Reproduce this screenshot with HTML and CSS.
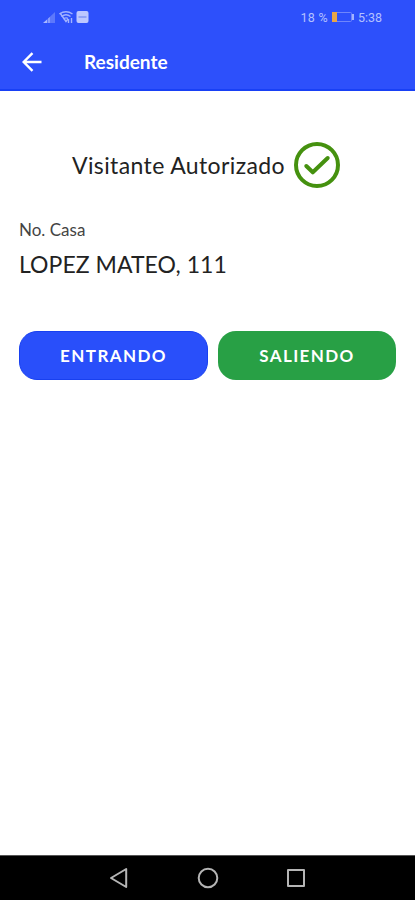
FILE: index.html
```html
<!DOCTYPE html>
<html lang="es">
  <head>
    <meta charset="UTF-8" />
    <meta name="viewport" content="width=device-width, initial-scale=1.0" />
    <title>Residente</title>
    <link rel="stylesheet" href="styles.css">
  </head>
  <body>
    <header class="header">
      <div class="status-bar">
        <svg class="status-icons" width="48" height="14" viewBox="0 0 48 14">
          <path d="M1 13L5 9.5V13Z" fill="#a9b8ff" />
          <path d="M5 9.5L13 2V13H5Z" fill="#5d78fb" />
          <path d="M6 8.5L8 7V13H6Z" fill="#8a9dfd" />
          <g fill="none" stroke="#a3b3ff" stroke-width="1.4">
            <path d="M17.5 4Q24 -0.5 30.5 4" />
            <path d="M19.5 6.5Q24 3 28.5 6.5" />
            <path d="M21.5 9Q24 7 26 8.5" />
            <path d="M18 3L24 11.5L26 9" />
            <path d="M26.5 9V13M29.5 8V13" />
          </g>
          <rect x="34.5" y="1" width="12" height="12" rx="2" fill="#bdc8ff" />
          <path d="M36.5 7H44.5" stroke="#8297f5" stroke-width="1.5" />
        </svg>
        <div class="status-right">
          <span class="percent">18 %</span>
          <svg class="battery" width="23" height="12" viewBox="0 0 23 12">
            <rect x="0.5" y="1.5" width="19" height="9" rx="1" fill="none" stroke="#6f86fb" />
            <rect x="0" y="1" width="5" height="10" fill="#e8a548" />
            <rect x="20" y="3" width="2" height="6" fill="#a3b3ff" />
          </svg>
          <span class="clock">5:38</span>
        </div>
      </div>
      <div class="toolbar">
        <svg class="back" width="20" height="20" viewBox="0 0 20 20">
          <path d="M19.5 10H2M10.5 1.2L1.7 10L10.5 18.8" fill="none" stroke="#fff" stroke-width="2.4" />
        </svg>
        <h1 class="title">Residente</h1>
      </div>
    </header>

    <main class="content">
      <div class="authorized">
        <span class="authorized-text">Visitante Autorizado</span>
        <svg width="46" height="46" viewBox="0 0 46 46" fill="none" stroke="#45910f">
          <circle cx="23" cy="23" r="21" stroke-width="4" />
          <path d="M12.3 24L18.8 30.3L33.7 16" stroke-width="4" stroke-linecap="round" stroke-linejoin="round" />
        </svg>
      </div>

      <div class="label">No. Casa</div>
      <div class="value">LOPEZ MATEO, 111</div>

      <div class="buttons">
        <button type="button" class="btn btn-in">ENTRANDO</button>
        <button type="button" class="btn btn-out">SALIENDO</button>
      </div>
    </main>

    <nav class="nav-bar">
      <svg width="20" height="22" viewBox="0 0 20 22">
        <path d="M17.2 2V20L2 11Z" />
      </svg>
      <svg width="22" height="22" viewBox="0 0 22 22">
        <circle cx="11" cy="11" r="9.3" />
      </svg>
      <svg width="18" height="20" viewBox="0 0 18 20">
        <rect x="1" y="2" width="16" height="16" />
      </svg>
    </nav>
  </body>
</html>
```

FILE: styles.css
```css
* {
  box-sizing: border-box;
}

body {
  margin: 0;
  height: 900px;
  display: flex;
  flex-direction: column;
  font-family: Lato, "Liberation Sans", sans-serif;
  background-color: #fff;
  color: #222;
}

svg {
  display: block;
  flex: none;
}

.header {
  height: 91px;
  background-color: #2d50fb;
  border-bottom: 2px solid #1840f5;
  color: #fff;
}

.status-bar {
  height: 34px;
  padding: 0 33px 0 42px;
  display: flex;
  align-items: center;
  justify-content: space-between;
}

.status-right {
  display: flex;
  align-items: center;
  font-family: Roboto, sans-serif;
  font-size: 12.5px;
  color: #b4c1ff;
}

.percent {
  margin-right: 4px;
  letter-spacing: 0.3px;
}

.battery {
  margin-right: 3px;
}

.toolbar {
  height: 55px;
  padding-left: 22px;
  display: flex;
  align-items: center;
}

.title {
  margin: 0 0 0 42px;
  font-size: 19px;
  font-weight: 700;
}

.content {
  flex: 1;
  padding: 51px 19px 0;
}

.authorized {
  display: flex;
  align-items: center;
  justify-content: center;
  gap: 9px;
  padding-right: 3px;
}

.authorized-text {
  font-size: 23px;
  letter-spacing: 0.38px;
}

.label {
  margin-top: 32px;
  font-size: 17px;
  line-height: 20px;
  color: #444;
}

.value {
  margin-top: 9px;
  font-size: 23px;
  line-height: 30px;
  letter-spacing: 0.05px;
}

.buttons {
  display: grid;
  grid-template-columns: 189px 178px;
  gap: 10px;
  margin-top: 52px;
}

.btn {
  height: 49px;
  padding: 0;
  border: none;
  border-radius: 18px;
  font-family: inherit;
  font-size: 17px;
  font-weight: 700;
  letter-spacing: 1.4px;
  color: #fff;
}

.btn-in {
  background-color: #294ffa;
  border: 1px solid #1840f0;
}

.btn-out {
  background-color: #28a045;
}

.nav-bar {
  height: 45px;
  padding-right: 2px;
  display: flex;
  align-items: center;
  justify-content: center;
  gap: 68px;
  background-color: #000;
  border-top: 1px solid #555;
}

.nav-bar svg {
  fill: none;
  stroke: #b5b5b5;
  stroke-width: 2;
  stroke-linejoin: round;
}
```
